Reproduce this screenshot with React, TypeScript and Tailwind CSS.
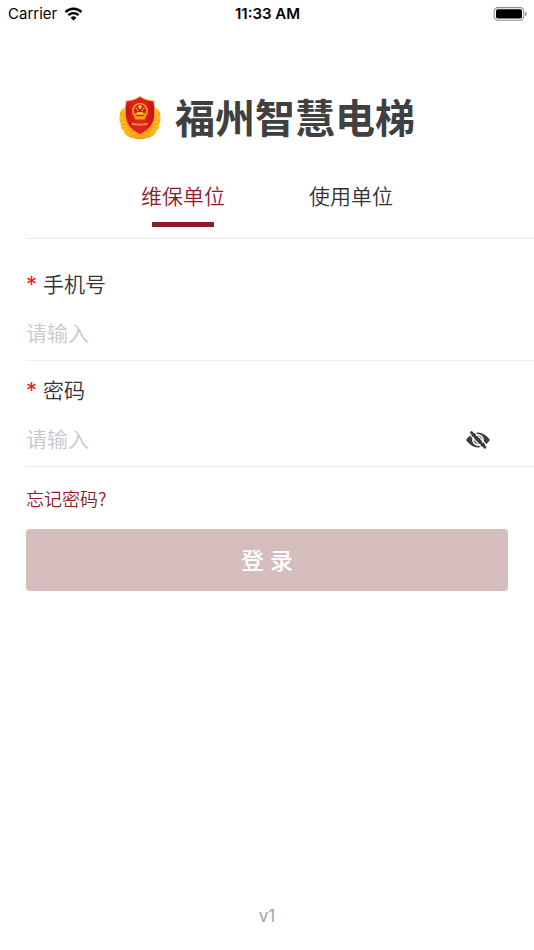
import { useState } from "react";
import { IoMdEye } from "react-icons/io";

const tabs = [
  { id: "maintenance", label: "维保单位" },
  { id: "usage", label: "使用单位" },
];

const StatusBar = () => (
  <div className="grid h-7 grid-cols-3 items-center pl-2 pr-[7px] font-['Inter','Liberation_Sans',sans-serif] text-[15px] font-normal text-black">
    <div className="flex items-center gap-[7px]">
      <span>Carrier</span>
      <svg className="h-[14px] w-[19px]" viewBox="0 0 18 14" fill="none">
        <path d="M1 5.1a11.5 11.5 0 0 1 16 0" stroke="currentColor" strokeWidth="2.5" />
        <path d="M3.9 8.2a7.4 7.4 0 0 1 10.2 0" stroke="currentColor" strokeWidth="2.3" />
        <path d="M9 13.6 6.1 10.7a4.2 4.2 0 0 1 5.8 0z" fill="currentColor" />
      </svg>
    </div>
    <span className="text-center font-semibold">11:33 AM</span>
    <svg className="h-[14px] w-[34px] justify-self-end" viewBox="0 0 34 14">
      <rect x="1.2" y="0.6" width="29.6" height="12.6" rx="3.6" fill="none" stroke="#8e8e8e" strokeWidth="1.1" />
      <rect x="3" y="2.3" width="26" height="9.2" rx="1.8" />
      <path d="M32.2 4.6c2 .8 2 3.8 0 4.6z" fill="#8e8e8e" />
    </svg>
  </div>
);

const Emblem = () => (
  <svg className="h-11 w-[42px]" viewBox="0 0 42 44">
    <defs>
      <linearGradient id="wreath" x1="0" y1="0" x2="0" y2="1">
        <stop offset="0" stopColor="#ffd028" />
        <stop offset="1" stopColor="#f58f12" />
      </linearGradient>
      <linearGradient id="shield" x1="0" y1="0" x2="1" y2="0">
        <stop offset="0" stopColor="#c4121c" />
        <stop offset="0.3" stopColor="#e3201d" />
        <stop offset="0.7" stopColor="#e3201d" />
        <stop offset="1" stopColor="#b90f1a" />
      </linearGradient>
    </defs>
    <path d="M5 26 21 30l16-4-3 12-13 3-13-3z" fill="#f9a51a" />
    <g fill="url(#wreath)">
      <ellipse cx="4.5" cy="17.5" rx="3.6" ry="5.5" transform="rotate(18 4.5 17.5)" />
      <ellipse cx="4.5" cy="24" rx="4" ry="5.5" transform="rotate(-18 4.5 24)" />
      <ellipse cx="6.5" cy="31" rx="4" ry="6.2" transform="rotate(-40 6.5 31)" />
      <ellipse cx="11" cy="37" rx="4" ry="7" transform="rotate(-62 11 37)" />
      <ellipse cx="37.5" cy="17.5" rx="3.6" ry="5.5" transform="rotate(-18 37.5 17.5)" />
      <ellipse cx="37.5" cy="24" rx="4" ry="5.5" transform="rotate(18 37.5 24)" />
      <ellipse cx="35.5" cy="31" rx="4" ry="6.2" transform="rotate(40 35.5 31)" />
      <ellipse cx="31" cy="37" rx="4" ry="7" transform="rotate(62 31 37)" />
      <ellipse cx="21" cy="39.5" rx="9" ry="3.8" />
    </g>
    <g fill="none" stroke="#ec7a0c" strokeWidth="0.7">
      <path d="M2 20c3 0 4.5 1 6 3M2.5 28c3.5-.6 5.500.4 8 3M6 35c4-1.600 6.500-1.400 9 .8M12 41c2-2 5-3 8-2" />
      <path d="M40 20c-3 0-4.500 1-6 3M39.500 28c-3.500-.6-5.500.4-8 3M36 35c-4-1.600-6.500-1.400-9 .8M30 41c-2-2-5-3-8-2" />
    </g>
    <path
      d="M21 .6c3.500 2.600 8.500 4.200 14 4.600-.6 3 1 5.200.6 8.800.8 12-3.600 19-14.600 24.600C10 33 5.600 26 6.400 14 6 10.400 7.600 8.200 7 5.200 12.500 4.800 17.500 3.200 21 .6z"
      fill="url(#shield)"
      stroke="#f2a021"
      strokeWidth="0.9"
    />
    <circle cx="21" cy="14.8" r="7.2" fill="#dc1a1c" stroke="#f6b52c" strokeWidth="1.4" />
    <path d="m21 8.600.7 1.500 1.600.2-1.200 1.100.3 1.600-1.400-.8-1.400.8.300-1.600-1.200-1.100 1.600-.2z" fill="#ffe14a" />
    <g fill="#ffe14a">
      <circle cx="17.2" cy="12.5" r=".7" />
      <circle cx="18.6" cy="14.2" r=".7" />
      <circle cx="23.4" cy="14.2" r=".7" />
      <circle cx="24.8" cy="12.5" r=".7" />
    </g>
    <path d="M18 16h6v1.200h2v1.600H16v-1.600h2z" fill="#fbc02d" />
    <path d="M15 20.200h12l-1.500 3.200h-9z" fill="#f9a51a" />
    <path d="M13 27.800q8 1.600 16 0" fill="none" stroke="#f9b233" strokeWidth="1.8" strokeDasharray="1.8 .5" />
  </svg>
);

const EyeClosed = () => (
  <svg className="h-[18px] w-6" viewBox="0 0 24 18" fill="none">
    <path d="M0 9Q5.500 1.500 12 1.500T24 9Q18.500 16.500 12 16.500T0 9z" fill="currentColor" />
    <path d="M9.200 4.800A5 5 0 0 1 16.200 11.600M14.800 13.200A5 5 0 0 1 7.800 6.400" stroke="#fff" strokeWidth="1.500" />
    <path d="m6.900-.8 15 16.400M2.700 2.400l15 16.400" stroke="#fff" strokeWidth="1.300" />
    <path d="m4.700.6 15 16.600" stroke="currentColor" strokeWidth="2.600" />
  </svg>
);

const RequiredLabel = ({ htmlFor, text }: { htmlFor: string; text: string }) => (
  <label htmlFor={htmlFor} className="flex h-8 items-center gap-[6px] text-[21px] text-[#333333]">
    <span className="font-['Inter',sans-serif] text-[22px] font-normal leading-8 text-[#ff1414]">*</span>
    {text}
  </label>
);

const inputStyle =
  "h-10 w-full min-w-0 bg-transparent text-[21px] text-[#3c3c3c] outline-none placeholder:text-[#c7c7cd]";

const App = () => {
  const [activeTab, setActiveTab] = useState("maintenance");
  const [phone, setPhone] = useState("");
  const [password, setPassword] = useState("");
  const [showPassword, setShowPassword] = useState(false);

  return (
    <div className="flex min-h-screen flex-col bg-white font-['Noto_Sans_CJK_SC',sans-serif] font-[350]">
      <StatusBar />

      <header className="mt-[60px] flex items-center justify-center gap-[14px]">
        <Emblem />
        <h1 className="pb-1 text-[40px] font-bold leading-[56px] text-[#404040]">福州智慧电梯</h1>
      </header>

      <main className="pl-[26px]">
        <div className="mt-[29px] flex justify-center border-b border-[#ebebeb] pr-[26px] pb-[11px]" role="tablist">
          {tabs.map((tab) => (
            <button
              key={tab.id}
              type="button"
              role="tab"
              aria-selected={activeTab === tab.id}
              onClick={() => setActiveTab(tab.id)}
              className={`flex w-[168px] flex-col items-center gap-2 text-[21px] leading-[37px] ${
                activeTab === tab.id ? "text-[#8b1d2a]" : "text-[#333333]"
              }`}
            >
              {tab.label}
              {activeTab === tab.id && <span className="h-[5px] w-[62px] bg-[#8b1d2a]" />}
            </button>
          ))}
        </div>

        <form onSubmit={(e) => e.preventDefault()}>
          <div className="mt-[29px] border-b border-[#ebebeb] pb-2">
            <RequiredLabel htmlFor="phone" text="手机号" />
            <div className="mt-3 pr-[26px]">
              <input
                id="phone"
                type="tel"
                placeholder="请输入"
                value={phone}
                onChange={(e) => setPhone(e.target.value)}
                className={inputStyle}
              />
            </div>
          </div>

          <div className="mt-[13px] border-b border-[#ebebeb] pb-2">
            <RequiredLabel htmlFor="password" text="密码" />
            <div className="mt-3 flex items-center pr-11">
              <input
                id="password"
                type={showPassword ? "text" : "password"}
                placeholder="请输入"
                value={password}
                onChange={(e) => setPassword(e.target.value)}
                className={inputStyle}
              />
              <button
                type="button"
                aria-label="显示密码"
                onClick={() => setShowPassword(!showPassword)}
                className="pt-1 text-[24px] text-[#3c3c3c]"
              >
                {showPassword ? <IoMdEye /> : <EyeClosed />}
              </button>
            </div>
          </div>

          <div className="pr-[26px]">
            <a href="#forgot" className="mt-[15px] inline-block text-[18px] leading-8 text-[#8b1d2a]">
              忘记密码?
            </a>
            <button
              type="submit"
              className="mt-[15px] block h-[62px] w-full rounded bg-[#d6bdbd] pt-[2px] font-['Inter','Noto_Sans_CJK_SC',sans-serif] text-[23px] font-medium text-white"
            >
              登 录
            </button>
          </div>
        </form>
      </main>

      <footer className="mt-auto pb-[22px] text-center font-['Inter',sans-serif] text-[17px] font-normal leading-6 text-[#a3a3a3]">
        v1
      </footer>
    </div>
  );
};

export default App;
